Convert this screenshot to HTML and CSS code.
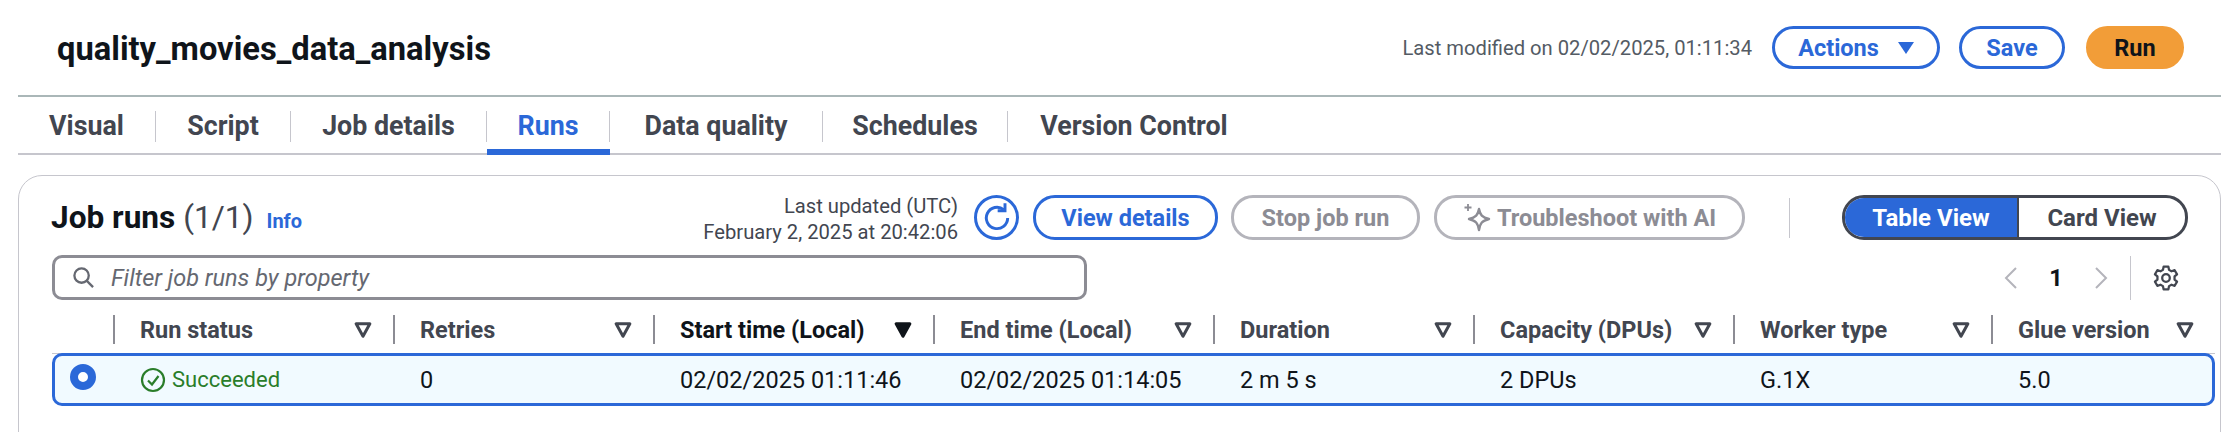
FILE: index.html
```html
<!DOCTYPE html>
<html lang="en">
<head>
<meta charset="UTF-8">
<title>quality_movies_data_analysis</title>
<link rel="stylesheet" href="styles.css">
</head>
<body>
<div class="page">

  <!-- Job header -->
  <header class="job-header">
    <h1 class="job-title">quality_movies_data_analysis</h1>
    <span class="modified">Last modified on 02/02/2025, 01:11:34</span>
    <button class="btn btn-actions">Actions
      <svg class="caret" viewBox="0 0 16 12"><path d="M0 0h16L8 12z"/></svg>
    </button>
    <button class="btn btn-save">Save</button>
    <button class="btn btn-run">Run</button>
  </header>

  <!-- Tabs -->
  <nav class="tabs">
    <a class="tab"><span>Visual</span></a>
    <a class="tab"><span>Script</span></a>
    <a class="tab"><span>Job details</span></a>
    <a class="tab tab-active"><span>Runs</span></a>
    <a class="tab"><span>Data quality</span></a>
    <a class="tab"><span>Schedules</span></a>
    <a class="tab tab-last"><span>Version Control</span></a>
  </nav>

  <!-- Job runs panel -->
  <section class="panel">
    <div class="panel-head">
      <h2 class="panel-title">Job runs <span class="count">(1/1)</span></h2>
      <a class="info">Info</a>
      <div class="updated">
        <div>Last updated (UTC)</div>
        <div>February 2, 2025 at 20:42:06</div>
      </div>
      <button class="btn btn-refresh" aria-label="Refresh">
        <svg viewBox="0 0 24 24" fill="none" stroke="currentColor" stroke-width="2.2">
          <path d="M20 12a8 8 0 1 1-3-6.300"/>
          <path d="M18 1v5.500h-5.500"/>
        </svg>
      </button>
      <button class="btn btn-details">View details</button>
      <button class="btn btn-disabled btn-stop">Stop job run</button>
      <button class="btn btn-disabled btn-ai">
        <svg viewBox="0 0 28 28" fill="none" stroke="currentColor" stroke-width="2.4" stroke-linejoin="round">
          <path d="M16 5c1.200 6 3 8.200 10 10-7 1.800-8.800 4-10 11-1.200-7-3-9.200-10-11 7-1.800 8.800-4 10-10z"/>
          <path d="M5 0v7M1.500 3.500h7" stroke-width="1.800"/>
        </svg>
        Troubleshoot with AI
      </button>
      <div class="head-divider"></div>
      <div class="segmented">
        <span class="seg seg-active">Table View</span>
        <span class="seg">Card View</span>
      </div>
    </div>

    <div class="filter-row">
      <div class="filter">
        <svg class="search" viewBox="0 0 24 24" fill="none" stroke="currentColor" stroke-width="2.4">
          <circle cx="10" cy="10" r="7.500"/>
          <path d="M15.500 15.500L22 22"/>
        </svg>
        <span>Filter job runs by property</span>
      </div>
      <div class="pager">
        <svg class="chev" viewBox="0 0 14 24" fill="none" stroke="currentColor" stroke-width="2"><path d="M12 2L2 12l10 10"/></svg>
        <span class="page-num">1</span>
        <svg class="chev" viewBox="0 0 14 24" fill="none" stroke="currentColor" stroke-width="2"><path d="M2 2l10 10L2 22"/></svg>
        <div class="pager-divider"></div>
        <svg class="gear" viewBox="0 0 24 24" fill="none" stroke="currentColor" stroke-width="2.100" stroke-linejoin="round">
          <path d="M9.800 1.500h4.400l.6 3 2.300 1.300 2.900-1 2.200 3.800-2.300 2v2.800l2.300 2-2.200 3.800-2.900-1-2.300 1.300-.6 3H9.800l-.6-3-2.300-1.300-2.900 1-2.200-3.800 2.300-2v-2.800l-2.300-2L4 4.800l2.900 1 2.300-1.300z"/>
          <circle cx="12" cy="12" r="3.500"/>
        </svg>
      </div>
    </div>

    <div class="runs">
      <div class="head-row">
        <div class="th th-select"></div>
        <div class="th">Run status<svg class="sort" viewBox="0 0 16 14"><path d="M2.500 2h11L8 12z"/></svg></div>
        <div class="th">Retries<svg class="sort" viewBox="0 0 16 14"><path d="M2.500 2h11L8 12z"/></svg></div>
        <div class="th th-sorted">Start time (Local)<svg class="sort sort-on" viewBox="0 0 16 14"><path d="M2.500 2h11L8 12z"/></svg></div>
        <div class="th">End time (Local)<svg class="sort" viewBox="0 0 16 14"><path d="M2.500 2h11L8 12z"/></svg></div>
        <div class="th">Duration<svg class="sort" viewBox="0 0 16 14"><path d="M2.500 2h11L8 12z"/></svg></div>
        <div class="th">Capacity (DPUs)<svg class="sort" viewBox="0 0 16 14"><path d="M2.500 2h11L8 12z"/></svg></div>
        <div class="th">Worker type<svg class="sort" viewBox="0 0 16 14"><path d="M2.500 2h11L8 12z"/></svg></div>
        <div class="th">Glue version<svg class="sort" viewBox="0 0 16 14"><path d="M2.500 2h11L8 12z"/></svg></div>
      </div>
      <div class="run-row">
        <div class="td td-select"><span class="radio"></span></div>
        <div class="td status">
          <svg viewBox="0 0 26 26" fill="none" stroke="currentColor" stroke-width="2.200">
            <circle cx="13" cy="13" r="11"/>
            <path d="M8 13.500l4 4 6.500-8.500"/>
          </svg>
          Succeeded
        </div>
        <div class="td">0</div>
        <div class="td">02/02/2025 01:11:46</div>
        <div class="td">02/02/2025 01:14:05</div>
        <div class="td">2 m 5 s</div>
        <div class="td">2 DPUs</div>
        <div class="td">G.1X</div>
        <div class="td">5.0</div>
      </div>
    </div>
  </section>
</div>
</body>
</html>
```
FILE: styles.css
```css
body {
  font-family: Roboto, Arial, sans-serif;
  margin: 0;
  height: 432px;
  overflow: hidden;
  background-color: #fff;
  color: #0f141a;
  font-size: 23.5px;
}

.page {
  margin: 0 15px 0 18px;
}

/* Header */
.job-header {
  display: flex;
  align-items: center;
  height: 95px;
  padding: 0 37px 0 39px;
  border-bottom: 2px solid #aab7b8;
  box-sizing: content-box;
}

.job-title {
  margin: 2px auto 0 0;
  font-size: 32.7px;
  font-weight: 700;
}

.modified {
  font-size: 20.2px;
  color: #545b64;
  margin-right: 20px;
}

.btn {
  display: inline-flex;
  align-items: center;
  justify-content: center;
  box-sizing: border-box;
  height: 43px;
  border: 3px solid #2b68d8;
  border-radius: 22px;
  background-color: #fff;
  color: #2b68d8;
  font-family: inherit;
  font-size: 23.5px;
  font-weight: 700;
  padding: 0;
}

.btn-actions {
  width: 168px;
  gap: 19px;
}

.caret {
  width: 16px;
  height: 12px;
  fill: #2b68d8;
}

.btn-save {
  width: 106px;
  margin-left: 19px;
}

.btn-run {
  width: 98px;
  margin-left: 21px;
  background-color: #f29d38;
  border-color: #f29d38;
  color: #0f141a;
}

/* Tabs */
.tabs {
  display: grid;
  grid-template-columns: 138px 135px 196px 123px 213px 185px 252px;
  height: 58px;
  box-sizing: border-box;
  border-bottom: 2px solid #c6c6cd;
}

.tab {
  display: flex;
  align-items: center;
  padding-top: 6px;
  margin-bottom: -2px;
  border-bottom: 6px solid transparent;
  color: #424650;
  font-size: 26.8px;
  font-weight: 700;
}

.tab span {
  flex: 1;
  height: 31px;
  line-height: 31px;
  text-align: center;
  border-right: 1px solid #c6c6cd;
}

.tab-last span {
  border-right: none;
}

.tab-active {
  color: #2b68d8;
  border-bottom-color: #2b68d8;
  border-radius: 4px 4px 0 0;
}

/* Panel */
.panel {
  margin-top: 20px;
  padding: 19px 5px 60px 32px;
  border: 1px solid #c6c6cd;
  border-radius: 24px;
}

.panel-head {
  display: flex;
  align-items: center;
  height: 45px;
  padding-right: 27px;
}

.panel-title {
  margin: 0;
  font-size: 31.6px;
  font-weight: 700;
}

.count {
  font-weight: 400;
  color: #424650;
}

.info {
  margin: 6px auto 0 13px;
  font-size: 20px;
  font-weight: 700;
  color: #2b68d8;
}

.updated {
  margin-top: 3px;
  text-align: right;
  font-size: 20.2px;
  line-height: 26px;
  color: #424650;
}

.btn-refresh {
  width: 45px;
  height: 45px;
  margin-left: 16px;
  border-radius: 50%;
}

.btn-refresh svg {
  width: 32px;
  height: 32px;
}

.btn-details {
  width: 185px;
  height: 45px;
  margin-left: 14px;
}

.btn-disabled {
  height: 45px;
  border-color: #b4b4bb;
  color: #8c8c94;
}

.btn-stop {
  width: 189px;
  margin-left: 13px;
}

.btn-ai {
  width: 311px;
  margin-left: 14px;
  gap: 6px;
}

.btn-ai svg {
  width: 28px;
  height: 28px;
}

.head-divider {
  width: 1px;
  height: 40px;
  margin: 0 52px 0 44px;
  background-color: #c6c6cd;
}

.segmented {
  display: flex;
  width: 346px;
  height: 45px;
  box-sizing: border-box;
  border: 3px solid #424650;
  border-radius: 22px;
  overflow: hidden;
  font-size: 24px;
  font-weight: 700;
  color: #424650;
}

.seg {
  flex: 1;
  display: flex;
  align-items: center;
  justify-content: center;
}

.seg-active {
  flex: 0 0 172px;
  background-color: #2b68d8;
  color: #fff;
  border-right: 2px solid #424650;
}

/* Filter and pagination */
.filter-row {
  display: flex;
  align-items: center;
  margin-top: 15px;
  padding-right: 36px;
}

.filter {
  display: flex;
  align-items: center;
  gap: 16px;
  width: 1035px;
  height: 45px;
  box-sizing: border-box;
  padding-left: 17px;
  margin-left: 1px;
  border: 3px solid #8c8c94;
  border-radius: 10px;
  font-style: italic;
  color: #656871;
}

.search {
  width: 23px;
  height: 23px;
  color: #656871;
}

.pager {
  display: flex;
  align-items: center;
  margin-left: auto;
}

.chev {
  width: 14px;
  height: 24px;
  color: #b4b4bb;
}

.page-num {
  width: 76px;
  text-align: center;
  font-weight: 700;
}

.pager-divider {
  width: 1px;
  height: 44px;
  margin: 0 22px;
  background-color: #c6c6cd;
}

.gear {
  width: 26px;
  height: 26px;
  color: #424650;
}

/* Runs table */
.runs {
  margin-left: 1px;
}

.head-row, .run-row {
  display: grid;
  grid-template-columns: 61px 280px 260px 280px 280px 260px 260px 258px 1fr;
}

.head-row {
  margin-top: 15px;
  padding-bottom: 9px;
  border-bottom: 1px solid #c6c6cd;
}

.th {
  display: flex;
  align-items: center;
  justify-content: space-between;
  height: 29px;
  padding: 0 20px 0 25px;
  border-left: 2px solid #8c8c94;
  font-weight: 700;
  color: #424650;
}

.th-select {
  border-left: none;
  border-right: 2px solid #c6c6cd;
  margin-right: -2px;
  padding: 0;
}

.th-sorted {
  color: #0f141a;
}

.sort {
  width: 20px;
  height: 18px;
  fill: none;
  stroke: #424650;
  stroke-width: 2.4;
  stroke-linejoin: round;
}

.sort-on {
  fill: #0f141a;
  stroke: #0f141a;
}

.run-row {
  align-items: center;
  height: 53px;
  box-sizing: border-box;
  border: 3px solid #2b68d8;
  border-radius: 10px;
  background-color: #f1faff;
  margin-top: -1px;
}

.td {
  padding-left: 24px;
}

.td-select {
  display: flex;
  padding-left: 15px;
  margin-bottom: 5px;
}

.radio {
  width: 26px;
  height: 26px;
  box-sizing: border-box;
  border: 8px solid #2b68d8;
  border-radius: 50%;
  background-color: #fff;
}

.status {
  display: flex;
  align-items: center;
  gap: 6px;
  color: #2a7d2a;
  font-size: 22px;
}

.status svg {
  width: 26px;
  height: 26px;
}
```
